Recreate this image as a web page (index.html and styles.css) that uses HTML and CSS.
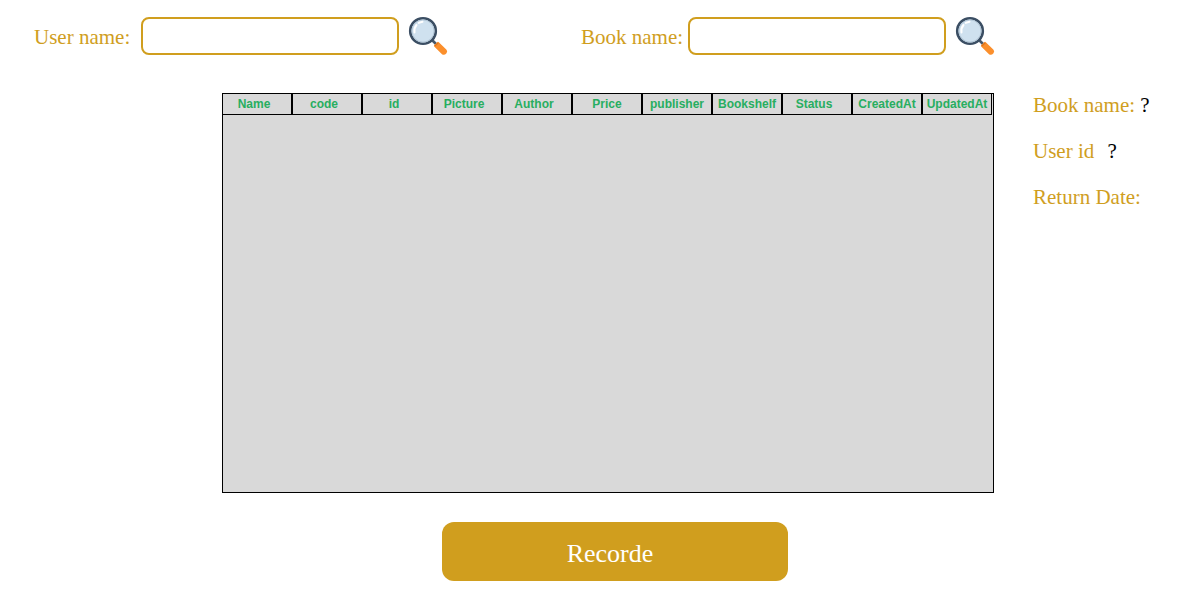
FILE: index.html
```html
<!DOCTYPE html>
<html lang="en">
<head>
<meta charset="utf-8">
<title>Record a loan</title>
<link rel="stylesheet" href="styles.css">
</head>
<body>
<svg width="0" height="0" class="defs" aria-hidden="true">
  <symbol id="magnifier" viewBox="0 0 40 40">
    <path d="M24 24 L29 29" stroke="#47586b" stroke-width="2.600"/>
    <path d="M26.200 30.400 Q25.600 29.600 26.300 29 L29.200 26.200 Q30 25.500 30.800 26.200 L38.300 33.500 Q40 35.300 38.500 37.200 Q36.300 39.800 34 38.300 Z" fill="#fb8f2c"/>
    <path d="M26.800 30.200 L30.200 26.800" stroke="#d9731f" stroke-width="1.200"/>
    <circle cx="15" cy="15" r="12.800" fill="#cfe1ef" stroke="#3b4e63" stroke-width="2.600"/>
    <circle cx="15" cy="15" r="11.100" fill="none" stroke="#b3c6d6" stroke-width="1"/>
    <path d="M6.500 16.500 A9 9 0 0 1 8.500 9" fill="none" stroke="#fff" stroke-width="2" stroke-linecap="round"/>
    <path d="M10.800 6.900 L14.500 5.800" stroke="#fff" stroke-width="2" stroke-linecap="round"/>
  </symbol>
</svg>
<form class="page">
  <header class="search">
    <div class="field">
      <label class="label" for="user">User name:</label>
      <input class="box" id="user" type="text">
      <button class="find" type="button" aria-label="Find user"><svg class="icon"><use href="#magnifier"/></svg></button>
    </div>
    <div class="field">
      <label class="label" for="book">Book name:</label>
      <input class="box" id="book" type="text">
      <button class="find" type="button" aria-label="Find book"><svg class="icon"><use href="#magnifier"/></svg></button>
    </div>
  </header>
  <main class="content">
    <div class="results">
      <table class="books">
        <thead>
          <tr>
            <th class="lean">Name</th><th class="lean">code</th><th class="lean">id</th><th class="lean">Picture</th><th class="lean">Author</th><th>Price</th><th>publisher</th><th>Bookshelf</th><th class="lean">Status</th><th>CreatedAt</th><th>UpdatedAt</th>
          </tr>
        </thead>
      </table>
    </div>
    <aside class="summary">
      <p class="line">Book name: <span class="value">?</span></p>
      <p class="line">User id <span class="value wide">?</span></p>
      <p class="line">Return Date:</p>
    </aside>
  </main>
  <footer class="actions">
    <button class="submit" type="submit">Recorde</button>
  </footer>
</form>
</body>
</html>
```
FILE: styles.css
```css
* {
  box-sizing: border-box;
}

body {
  margin: 0;
  background: #fff;
  color: #d09e1e;
  font-family: "Liberation Serif", "Times New Roman", serif;
  font-size: 21px;
  line-height: 24px;
}

.defs {
  position: absolute;
}

.search {
  display: grid;
  grid-template-columns: repeat(2, minmax(0, 1fr));
  padding: 16px 72px 0 34px;
}

.field {
  display: flex;
  align-items: center;
  padding-right: 133px;
}

.label {
  width: 107px;
  flex: none;
  padding-top: 2px;
  white-space: nowrap;
}

.box {
  flex: 1;
  min-width: 0;
  height: 38px;
  padding: 0 8px;
  border: 2px solid #d09e1e;
  border-radius: 8px;
  background: #fff;
  font: inherit;
}

.find {
  flex: none;
  margin-left: 9px;
  padding: 0;
  border: 0;
  background: none;
}

.icon {
  display: block;
  width: 40px;
  height: 40px;
}

.content {
  display: grid;
  grid-template-columns: 222px 1fr 206px;
  padding-top: 37px;
}

.results {
  grid-column: 2;
  min-height: 400px;
  padding-right: 1px;
  border: 1px solid #000;
  background: #d9d9d9;
}

.books {
  width: 100%;
  table-layout: fixed;
  border-collapse: separate;
  border-spacing: 0;
}

.books th {
  height: 21px;
  padding: 1px 0 0;
  border: 1px solid #000;
  border-top: 0;
  color: #27ae60;
  font: bold 12px/19px "Liberation Sans", Arial, sans-serif;
  text-align: center;
  white-space: nowrap;
}

.books th:first-child {
  width: 69px;
  border-left: 0;
}

.books .lean {
  padding-right: 6px;
}

.summary {
  padding-left: 39px;
}

.line {
  margin: 0 0 22px;
  white-space: nowrap;
}

.value {
  color: #000;
}

.wide {
  padding-left: 8px;
}

.actions {
  padding: 29px 412px 19px 442px;
}

.submit {
  width: 100%;
  padding: 16px 10px 12px 0;
  border: 0;
  border-radius: 12px;
  background: #d09e1e;
  color: #fff;
  font: inherit;
  font-size: 26px;
  line-height: 31px;
}
```
